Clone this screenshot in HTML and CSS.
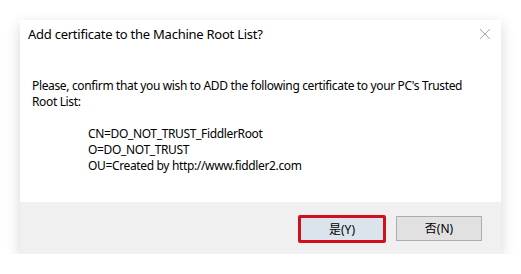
FILE: index.html
```html
<!DOCTYPE html>
<html>
<head>
    <meta charset="UTF-8">
    <title>Add certificate to the Machine Root List?</title>
    <link rel="stylesheet" href="styles.css">
</head>
<body>
    <div class="dialog">
        <div class="dialog-title">
            <span>Add certificate to the Machine Root List?</span>
            <svg class="close" width="12" height="12" viewBox="0 0 12 12">
                <path d="M1 1 L11 11 M11 1 L1 11" stroke="#a8a8a8" stroke-width="1" fill="none"/>
            </svg>
        </div>
        <div class="dialog-body">
            <p>Please, confirm that you wish to ADD the following certificate to your PC's Trusted Root List:</p>
            <div class="cert">
                <div>CN=DO_NOT_TRUST_FiddlerRoot</div>
                <div>O=DO_NOT_TRUST</div>
                <div>OU=Created by http://www.fiddler2.com</div>
            </div>
        </div>
        <div class="dialog-footer">
            <button class="btn btn-default">是(Y)</button>
            <button class="btn">否(N)</button>
        </div>
    </div>
</body>
</html>
```

FILE: styles.css
```css
body {
    margin: 0;
    padding: 20px 20px 0 20px;
    background-color: #ffffff;
    font-family: "Noto Sans", "Noto Sans CJK SC", sans-serif;
    color: #000;
}

.dialog {
    width: 481px;
    height: 234px;
    display: flex;
    flex-direction: column;
    background-color: #ffffff;
    box-shadow: 0 5px 14px rgba(0, 0, 0, 0.16);
}

.dialog-title {
    display: flex;
    justify-content: space-between;
    align-items: center;
    height: 28px;
    padding: 0 10px 0 8px;
    font-size: 13px;
    letter-spacing: -0.25px;
}

.dialog-body {
    flex: 1;
    padding: 30px 12px 0 12px;
    font-size: 12px;
    line-height: 16px;
    letter-spacing: -0.35px;
}

.dialog-body p {
    margin: 0 0 16px 0;
}

.cert {
    padding-left: 56px;
}

.dialog-footer {
    height: 52px;
    background-color: #f0f0f0;
    display: flex;
    justify-content: flex-end;
    align-items: center;
    gap: 10px;
    padding-right: 19px;
    box-sizing: border-box;
}

.btn {
    width: 86px;
    height: 25px;
    border: 1px solid #adadad;
    background-color: #e1e1e1;
    font-family: "Noto Sans", "Noto Sans CJK SC", sans-serif;
    font-size: 12px;
    padding: 0;
    color: #000;
}

.btn-default {
    width: 88px;
    height: 28px;
    border: 3px solid #d0101c;
    border-radius: 2px;
    background-color: #dbe4ec;
    margin-top: 1px;
}
```
